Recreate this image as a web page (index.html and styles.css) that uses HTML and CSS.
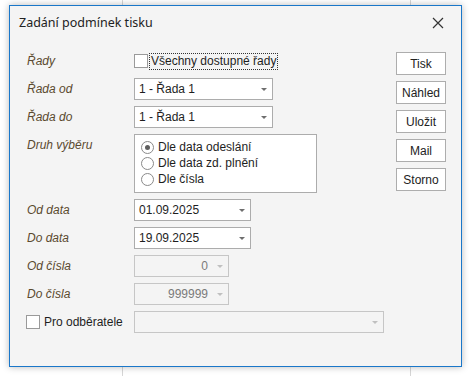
FILE: index.html
```html
<!DOCTYPE html>
<html lang="cs">
<head>
<meta charset="utf-8">
<link rel="stylesheet" href="styles.css">
</head>
<body>
<div class="desk">
  <div class="dialog">
    <div class="titlebar">
      <span class="title">Zadání podmínek tisku</span>
      <svg class="close" width="12" height="12" viewBox="0 0 12 12"><path d="M1 1L11 11M11 1L1 11" stroke="#333" stroke-width="1.2" fill="none"/></svg>
    </div>
    <div class="body">
      <div class="form">
        <div class="label">Řady</div>
        <div class="ctl">
          <span class="check"></span>
          <span class="focus">Všechny dostupné řady</span>
        </div>

        <div class="label">Řada od</div>
        <div class="ctl"><div class="combo w139"><span class="val">1 - Řada 1</span><span class="arrow"></span></div></div>

        <div class="label">Řada do</div>
        <div class="ctl"><div class="combo w139"><span class="val">1 - Řada 1</span><span class="arrow"></span></div></div>

        <div class="label">Druh výběru</div>
        <div class="ctl">
          <div class="group">
            <div class="radio-row"><span class="radio on"></span>Dle data odeslání</div>
            <div class="radio-row"><span class="radio"></span>Dle data zd. plnění</div>
            <div class="radio-row"><span class="radio"></span>Dle čísla</div>
          </div>
        </div>

        <div class="label">Od data</div>
        <div class="ctl"><div class="combo w117"><span class="val">01.09.2025</span><span class="arrow"></span></div></div>

        <div class="label">Do data</div>
        <div class="ctl"><div class="combo w117"><span class="val">19.09.2025</span><span class="arrow"></span></div></div>

        <div class="label">Od čísla</div>
        <div class="ctl"><div class="combo w95 disabled"><span class="val right">0</span><span class="arrow"></span></div></div>

        <div class="label">Do čísla</div>
        <div class="ctl"><div class="combo w95 disabled"><span class="val right">999999</span><span class="arrow"></span></div></div>

        <div class="label plain"><span class="check"></span>Pro odběratele</div>
        <div class="ctl"><div class="combo w250 disabled"><span class="val"></span><span class="arrow"></span></div></div>
      </div>
      <div class="buttons">
        <div class="btn">Tisk</div>
        <div class="btn">Náhled</div>
        <div class="btn">Uložit</div>
        <div class="btn">Mail</div>
        <div class="btn">Storno</div>
      </div>
    </div>
  </div>
</div>
</body>
</html>
```
FILE: styles.css
```css
html, body {
  margin: 0;
  padding: 0;
}
body {
  width: 469px;
  height: 376px;
  overflow: hidden;
  background:
    linear-gradient(to right, transparent 122px, #d6d6d6 122px, #d6d6d6 123px, transparent 123px, transparent 410px, #d6d6d6 410px, #d6d6d6 411px, transparent 411px),
    #ffffff;
  font-family: "Liberation Sans", Arial, sans-serif;
  font-size: 12px;
  color: #1e1e1e;
}
.desk {
  padding: 5px 0 0 9px;
}
.dialog {
  width: 451px;
  height: 360px;
  border: 1px solid #1a77c9;
  background: #f4f4f4;
  box-shadow: 0 0 7px rgba(0, 0, 0, 0.28);
  display: flex;
  flex-direction: column;
}
.titlebar {
  height: 44px;
  display: flex;
  align-items: flex-start;
  justify-content: space-between;
  padding: 10px 17px 0 9px;
  box-sizing: border-box;
}
.title {
  font-family: "Noto Sans", "Open Sans", sans-serif;
  font-size: 12.5px;
  color: #222;
  line-height: 14px;
}
.close {
  margin-top: 1px;
}
.body {
  display: flex;
  align-items: flex-start;
  padding-left: 17px;
}
.form {
  display: grid;
  grid-template-columns: 107px auto;
  row-gap: 6px;
  width: 368px;
}
.label {
  font-style: italic;
  color: #5b4a2f;
  line-height: 14px;
  padding-top: 4px;
}
.label.plain {
  font-style: normal;
  color: #1e1e1e;
  display: flex;
  align-items: center;
  gap: 4px;
  padding-top: 0;
  margin-left: -1px;
}
.ctl {
  display: flex;
  align-items: center;
  min-height: 22px;
}
.check {
  width: 12px;
  height: 12px;
  border: 1px solid #9a9a9a;
  background: #fff;
  flex: none;
}
.focus {
  margin-left: 2px;
  padding: 0 1px;
  line-height: 15px;
  outline: 1px dotted #333;
  outline-offset: 0;
}
.combo {
  height: 22px;
  box-sizing: border-box;
  border: 1px solid #acacac;
  background: #fff;
  display: flex;
  align-items: center;
}
.w139 { width: 139px; }
.w117 { width: 117px; }
.w95 { width: 95px; }
.w250 { width: 250px; }
.val {
  flex: 1;
  padding-left: 4px;
  white-space: nowrap;
}
.val.right {
  text-align: right;
  padding-right: 3px;
  padding-left: 0;
}
.arrow {
  width: 0;
  height: 0;
  border-left: 3.5px solid transparent;
  border-right: 3.5px solid transparent;
  border-top: 3.5px solid #6e6e6e;
  margin: 1px 5px 0 6px;
}
.combo.disabled {
  background: #f4f4f4;
  border-color: #c6c6c6;
  color: #7a7a7a;
}
.combo.disabled .arrow {
  border-top-color: #c0c0c0;
}
.group {
  width: 183px;
  height: 59px;
  box-sizing: border-box;
  border: 1px solid #acacac;
  background: #fff;
  padding: 4px 0 0 6px;
}
.radio-row {
  display: flex;
  align-items: center;
  height: 16px;
  gap: 4px;
}
.radio {
  width: 11px;
  height: 11px;
  border: 1px solid #8a8a8a;
  border-radius: 50%;
  background: #fff;
  display: flex;
  align-items: center;
  justify-content: center;
}
.radio.on::after {
  content: "";
  width: 5px;
  height: 5px;
  border-radius: 50%;
  background: #5e5e5e;
}
.buttons {
  display: flex;
  flex-direction: column;
  gap: 6px;
  margin-left: 1px;
  margin-top: 2px;
}
.btn {
  width: 50px;
  height: 23px;
  box-sizing: border-box;
  border: 1px solid #adadad;
  background: #fff;
  display: flex;
  align-items: center;
  justify-content: center;
  color: #222;
}
```
